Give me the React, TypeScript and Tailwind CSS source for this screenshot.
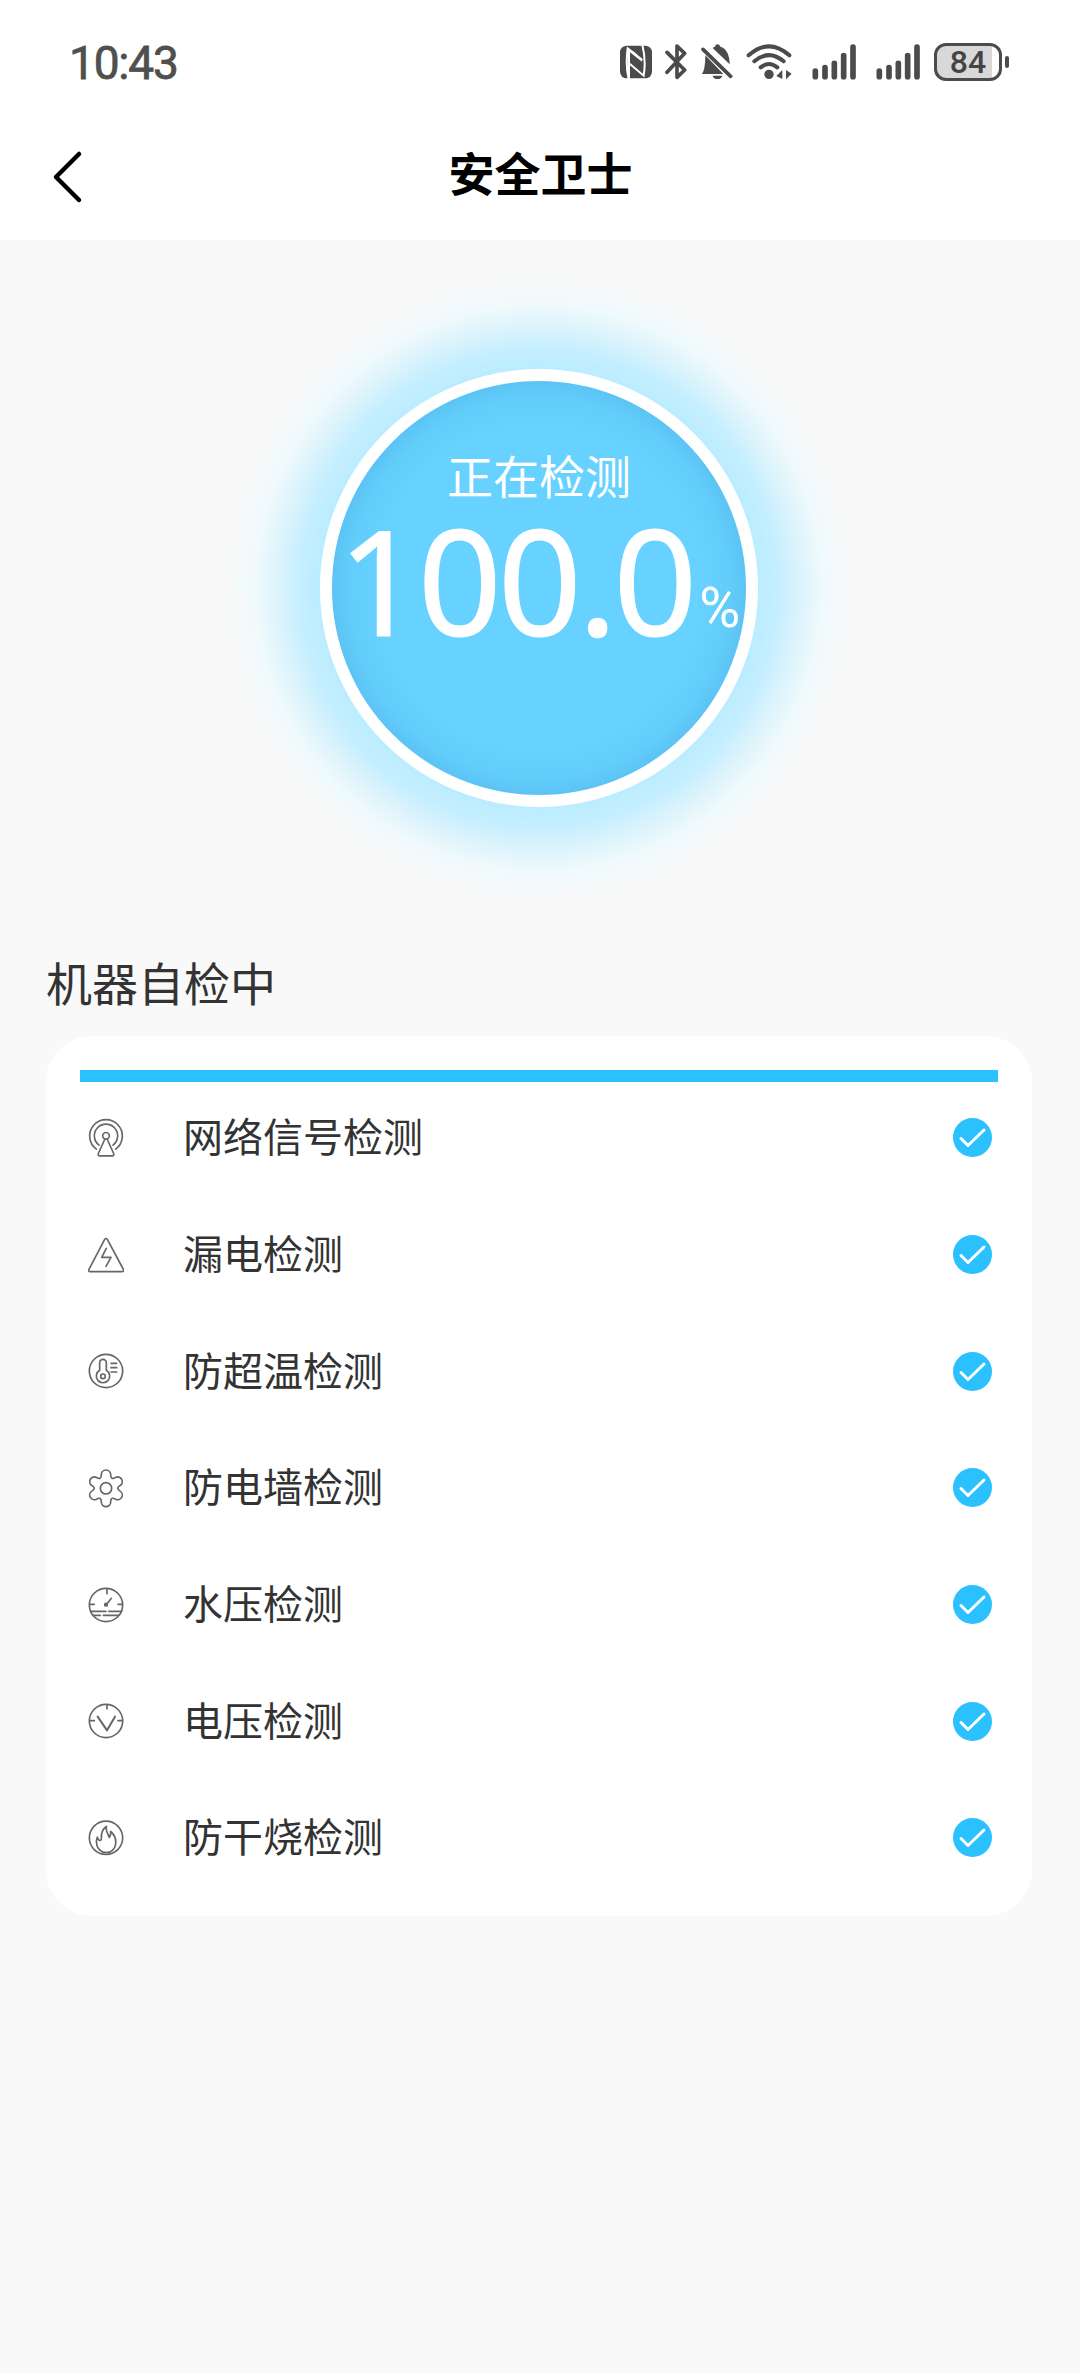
import React from 'react'

const CJK = "font-['Noto_Sans_CJK_SC',sans-serif]"

function StatusBar (): React.ReactElement {
  return (
    <div className="flex h-[124px] items-center pl-[69px] text-[#4f4f4f]">
      <span className="w-[551px] pt-[2px] font-['Roboto',sans-serif] text-[46px] leading-none font-normal tracking-[-1.2px] [-webkit-text-stroke:0.8px_#4f4f4f]">10:43</span>

      {/* NFC */}
      <svg className="h-[34px] w-[32px]" viewBox="60 44 96 102" fill="none">
        <rect x="60" y="46" width="96" height="98" rx="20" fill="#4b4b4b" />
        <path d="M86 146C79 118 79 84 83 54L127 89M127 44C135 75 135 112 131 136L89 100" stroke="#fff" strokeWidth="6" />
        <path d="M82 52L104 66L126 88V94L90 66V146H84Z" fill="#fff" />
      </svg>

      {/* bluetooth */}
      <svg className="ml-[13px] h-[36px] w-[22px]" viewBox="196 42 66 108" fill="none" stroke="#4b4b4b" strokeWidth="11" strokeLinecap="round" strokeLinejoin="round">
        <path d="M202 67L255 120L232 142V48L255 70L202 127" />
      </svg>

      {/* muted bell */}
      <svg className="ml-[14px] h-[36px] w-[32px]" viewBox="301 42 96 108" fill="none">
        <path d="M314 76L368 132H303Q314 122 314 76ZM336 54Q338 51 343 50Q344 43 350 43Q357 43 359 50Q386 58 387 103ZM336 137H365Q362 147 350 147Q339 147 336 137Z" fill="#4b4b4b" />
        <path d="M307 58L390 139" stroke="#4b4b4b" strokeWidth="11" strokeLinecap="round" />
      </svg>

      {/* wifi */}
      <svg className="ml-[13px] h-[36px] w-[46px]" viewBox="435 42 138 108" fill="none" stroke="#4b4b4b" strokeWidth="12" strokeLinecap="round">
        <path d="M443 76Q504 22 565 76M460 94Q504 57 548 94M479 112Q504 92 529 112" />
        <circle cx="504" cy="133" r="14" fill="#4b4b4b" stroke="none" />
        <path d="M544 120V147L526 138ZM555 120V148L572 131Z" fill="#4b4b4b" stroke="none" />
      </svg>

      <Signal className="ml-[20px] h-[36px] w-[44px]" />
      <Signal className="ml-[20px] h-[36px] w-[44px]" />

      {/* battery */}
      <div className="ml-[14px] flex h-[38px] w-[68px] items-center justify-center rounded-[12px] border-[3px] border-[#4b4b4b] bg-[linear-gradient(90deg,#d8d8d8_88%,#fff_88%)]">
        <span className="font-['Roboto',sans-serif] text-[32px] leading-none font-medium text-[#444]">84</span>
      </div>
      <div className="ml-[3px] h-[12px] w-[4px] rounded-full bg-[#4b4b4b]" />
    </div>
  )
}

function Signal ({ className }: { className: string }): React.ReactElement {
  return (
    <svg className={className} viewBox="632 42 132 108" stroke="#4b4b4b" strokeWidth="17" strokeLinecap="round">
      <path d="M642 123V140M671 113V140M699 100V140M727 77V140M755 51V140" />
    </svg>
  )
}

const items = [
  {
    name: '网络信号检测',
    box: '52 55.5 108 120',
    icon: (
      <>
        <path d="M77 149A49 49 0 1 1 135 149M85 137A35 35 0 1 1 127 137" />
        <circle cx="106" cy="109" r="10" />
        <path d="M102 120L83 162Q81 169 88 169H125Q131 169 129 162L110 120" />
      </>
    )
  },
  {
    name: '漏电检测',
    box: '52 405 108 120',
    icon: (
      <>
        <path d="M102 418Q106 413 110 418L158 508Q161 515 154 515H59Q52 515 55 508Z" />
        <path d="M107 445L93 472H121L106 499" />
      </>
    )
  },
  {
    name: '防超温检测',
    box: '52 66 108 120',
    icon: (
      <>
        <circle cx="106" cy="126" r="50" />
        <path d="M87 124V101A10 10 0 0 1 107 101V124A20 20 0 1 1 87 124ZM121 103H138M121 116H138M121 129H138" />
        <circle cx="97" cy="142" r="7" />
      </>
    )
  },
  {
    name: '防电墙检测',
    box: '-54 -61 108 120',
    icon: (
      <>
        <path d="M-14 -41A14 14 0 0 1 14 -41Q14 -24 28.5 -32.6A14 14 0 0 1 42.5 -8.4Q28 0 42.5 8.4A14 14 0 0 1 28.5 32.6Q14 24 14 41A14 14 0 0 1 -14 41Q-14 24 -28.5 32.6A14 14 0 0 1 -42.5 8.4Q-28 0 -42.5 -8.4A14 14 0 0 1 -28.5 -32.6Q-14 -24 -14 -41Z" />
        <circle r="17" />
      </>
    )
  },
  {
    name: '水压检测',
    box: '52 75 108 120',
    icon: (
      <>
        <circle cx="106" cy="135" r="50" />
        <path d="M109 87V101M58 133H71M142 133H155M107 134L122 115M60 154H106M114 154H153M67 166H89M98 166H145" />
        <circle cx="106" cy="134" r="4" fill="#666" />
      </>
    )
  },
  {
    name: '电压检测',
    box: '52 426 108 120',
    icon: (
      <>
        <circle cx="106" cy="486" r="50" />
        <path d="M109 438V450M58 485H71M142 485H155" />
        <path d="M81 473L109 514L133 473" strokeWidth="6" />
      </>
    )
  },
  {
    name: '防干烧检测',
    box: '52 85.5 108 120',
    icon: (
      <>
        <circle cx="106" cy="145" r="50" />
        <path d="M97 188C78 178 73 159 80 143C83 153 89 156 92 150C91 133 94 119 107 111C104 123 112 132 116 144C119 139 121 132 120 126C138 141 144 174 117 188Q107 191 97 188Z" />
      </>
    )
  }
]

export default function App (): React.ReactElement {
  return (
    <div className={`flex h-[2373px] w-[1080px] flex-col overflow-hidden bg-[#f9f9f9] ${CJK}`}>
      <header className="h-[240px] shrink-0 bg-white">
        <StatusBar />
        <div className="flex h-[104px] items-start pl-[51px]">
          <svg className="mt-[26px] h-[54px] w-[32px]" viewBox="0 0 32 54" fill="none" stroke="#000" strokeWidth="4.5" strokeLinecap="round" strokeLinejoin="round">
            <path d="M28 4L5 27L28 50" />
          </svg>
          <h1 className="mt-[17px] flex-1 pr-[82px] text-center text-[46px] leading-[60px] font-bold text-black">安全卫士</h1>
        </div>
      </header>

      {/* progress dial */}
      <div className="mt-[18px] ml-[209px] flex size-[660px] shrink-0 items-center justify-center bg-[radial-gradient(closest-side,#baecff_66%,#c6efff_73%,#dcf3fc_79%,#effafc_86%,#f9f9f9_95%)]">
        <div className="flex size-[438px] flex-col items-center rounded-full border-[12px] border-white bg-[radial-gradient(closest-side,#67d2ff_78%,#62ccfb_92%,#5bc4f4_100%)] pt-[63px] text-white">
          <div className="text-[46px] leading-[60px]">正在检测</div>
          <div className="mt-[9px] flex items-baseline font-['Noto_Sans',sans-serif] leading-[132px] whitespace-nowrap">
            <span className="text-[147px] tracking-[-4px] [-webkit-text-stroke:1px_#fff]">100.0</span>
            <span className="ml-[6px] self-end pb-[7px] font-['Roboto',sans-serif] text-[56px] leading-[60px]">%</span>
          </div>
        </div>
      </div>

      <h2 className="mt-[33px] ml-[46px] text-[46px] leading-[60px] text-[#333]">机器自检中</h2>

      <section className="mt-[25px] ml-[46px] h-[880px] w-[986px] rounded-[46px] bg-white px-[34px] pt-[34px]">
        <div className="h-[12px] bg-[#2bc1ff]" />
        <ul className="-mt-[2px]">
          {items.map((item) => (
            <li key={item.name} className="flex h-[116.7px] items-center border-b border-[#fdfdfd] pr-[6px] pl-[8px]">
              <svg className="h-[40px] w-[36px]" viewBox={item.box} fill="none" stroke="#666" strokeWidth="5" strokeLinecap="round" strokeLinejoin="round">
                {item.icon}
              </svg>
              <span className="ml-[59px] flex-1 pb-[5px] text-[40px] leading-[60px] text-[#333]">{item.name}</span>
              <svg className="size-[39px]" viewBox="0 0 39 39" fill="none">
                <circle cx="19.5" cy="19.5" r="19.5" fill="#2bc1ff" />
                <path d="M8 20.5L15 27.5L31 12" stroke="#fff" strokeWidth="3" strokeLinecap="round" strokeLinejoin="round" />
              </svg>
            </li>
          ))}
        </ul>
      </section>
    </div>
  )
}
